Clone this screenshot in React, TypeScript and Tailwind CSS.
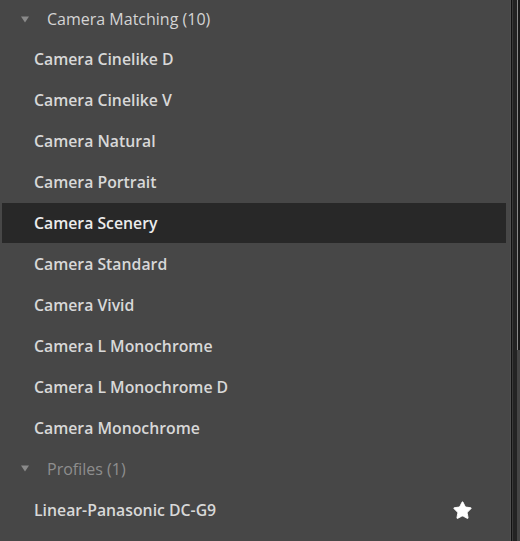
import { Star } from "lucide-react"

const ITEMS = [
  "Camera Cinelike D",
  "Camera Cinelike V",
  "Camera Natural",
  "Camera Portrait",
  "Camera Scenery",
  "Camera Standard",
  "Camera Vivid",
  "Camera L Monochrome",
  "Camera L Monochrome D",
  "Camera Monochrome",
]

const SELECTED = "Camera Scenery"

function Caret() {
  return (
    <svg width="8" height="7" viewBox="0 0 8 7" className="shrink-0">
      <path d="M0 0.5 H8 L4 6.5 Z" fill="#8a8a8a" />
    </svg>
  )
}

function GroupHeader({ label, dim, className = "" }: { label: string; dim?: boolean; className?: string }) {
  return (
    <div className={`flex items-center pl-[21px] shrink-0 ${className}`}>
      <Caret />
      <span className={`ml-[18px] text-[16px] ${dim ? "text-[#8e8e8e]" : "text-[#d4d4d4]"}`}>{label}</span>
    </div>
  )
}

function ProfileRow({ name, selected, starred }: { name: string; selected?: boolean; starred?: boolean }) {
  return (
    <div className="h-[41px] shrink-0 flex items-stretch py-[0.5px]">
      <div
        className={`flex-1 flex items-center ml-[2px] mr-[4px] pl-[32px] pr-[33px] pt-[2px] ${selected ? "bg-[#282828] text-[#ececec]" : "text-[#d8d8d8]"}`}
      >
        <span className="flex-1 text-[15.8px] font-semibold">{name}</span>
        {starred && <Star className="w-[21px] h-[21px] text-white" fill="white" strokeWidth={1} />}
      </div>
    </div>
  )
}

export default function App() {
  return (
    <div
      className="w-[520px] h-[541px] flex bg-[#474747] overflow-hidden"
      style={{ fontFamily: '"Open Sans", "Noto Sans", sans-serif' }}
    >
      <div className="w-[510px] flex flex-col">
        <GroupHeader label="Camera Matching (10)" className="h-[38px]" />
        {ITEMS.map((name) => (
          <ProfileRow key={name} name={name} selected={name === SELECTED} />
        ))}
        <GroupHeader label="Profiles (1)" dim className="h-[41px]" />
        <ProfileRow name="Linear-Panasonic DC-G9" starred />
      </div>
      {/* window edge / scrollbar strip */}
      <div className="w-px bg-[#505050]" />
      <div className="w-px bg-[#111111]" />
      <div className="w-px bg-[#3a3a3a]" />
      <div className="w-[4px] bg-[#232323]" />
      <div className="w-[3px] flex flex-col">
        <div className="h-[350px] flex">
          <div className="w-px bg-[#8a8a8a]" />
          <div className="w-[2px] bg-[#1a1a1a]" />
        </div>
        <div className="flex-1 bg-[#444444]" />
      </div>
    </div>
  )
}
